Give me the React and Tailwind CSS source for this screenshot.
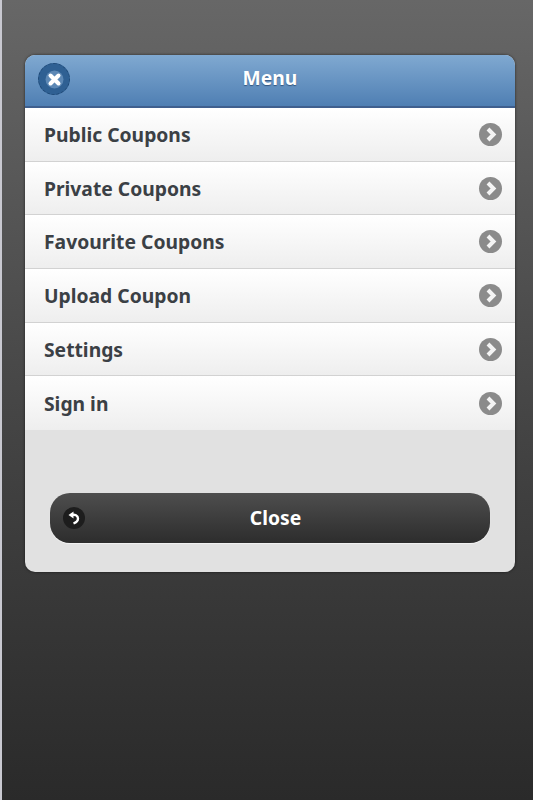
const items = ['Public Coupons', 'Private Coupons', 'Favourite Coupons', 'Upload Coupon', 'Settings', 'Sign in']

function MenuRow({ label, last }) {
  return (
    <div
      className={`flex h-[53.7px] items-center justify-between bg-gradient-to-b from-white to-[#eeeeee] pl-[19px] pr-[13px] ${
        last ? '' : 'border-b border-[#d2d2d2]'
      }`}
    >
      <span className="pt-[2px] text-[19.3px] font-bold text-[#3b4045]">{label}</span>
      <span className="flex size-[23px] items-center justify-center rounded-full bg-[#8b8b8b]">
        <svg width="17" height="17" viewBox="0 0 17 17" fill="none">
          <path d="M6 3 11.5 8.5 6 14" stroke="#f4f4f4" strokeWidth="4" />
        </svg>
      </span>
    </div>
  )
}

export default function App() {
  return (
    <div className="h-[800px] w-[533px] overflow-hidden border-l-2 border-[#c8c8d0] bg-gradient-to-b from-[#676767] via-[#464646] to-[#2a2a2a] pl-[23px] pr-[18px] pt-[55px] font-['Noto_Sans',sans-serif]">
      <div className="h-[517px] overflow-hidden rounded-[10px] bg-[#e1e1e1] shadow-[0_0_3px_rgba(0,0,0,0.6)]">
        <div className="relative flex h-[53px] items-center justify-center border-b-2 border-[#3f5f8e] bg-gradient-to-b from-[#80a9d1] to-[#4f7fb3] pb-[5px]">
          <span className="absolute left-[13px] top-[8px] flex size-[32px] items-center justify-center rounded-full border border-dashed border-[#1f4a78] bg-[#2f6093]">
            <svg width="19" height="19" viewBox="0 0 19 19" fill="none">
              <circle cx="9.5" cy="9.5" r="9" fill="#5d88b5" />
              <path d="M5.5 5.5 13.5 13.5M13.5 5.5 5.5 13.5" stroke="white" strokeWidth="4" strokeLinecap="round" />
            </svg>
          </span>
          <span className="text-[19.3px] font-bold text-white [text-shadow:0_1px_1px_rgba(30,60,100,0.7)]">Menu</span>
        </div>
        {items.map((label, i) => (
          <MenuRow key={label} label={label} last={i === items.length - 1} />
        ))}
        <div className="px-[25px] pt-[63px]">
          <div className="flex h-[50px] items-center rounded-[20px] bg-gradient-to-b from-[#4e4e4e] to-[#2d2d2d] pl-[13px] shadow-[0_1px_1px_rgba(255,255,255,0.6)]">
            <span className="flex size-[22px] items-center justify-center rounded-full bg-[#1d1d1d]">
              <svg width="16" height="16" viewBox="0 0 16 16" fill="none">
                <path d="M5 5C9 4 12 5.5 12 8.5 12 11 10 12.5 7.5 13.5" stroke="white" strokeWidth="2.4" />
                <path d="M7.5 1.5 2.5 5 7.5 8.5Z" fill="white" />
              </svg>
            </span>
            <span className="-ml-[24px] flex-1 text-center text-[19.3px] font-bold text-white">Close</span>
          </div>
        </div>
      </div>
    </div>
  )
}
